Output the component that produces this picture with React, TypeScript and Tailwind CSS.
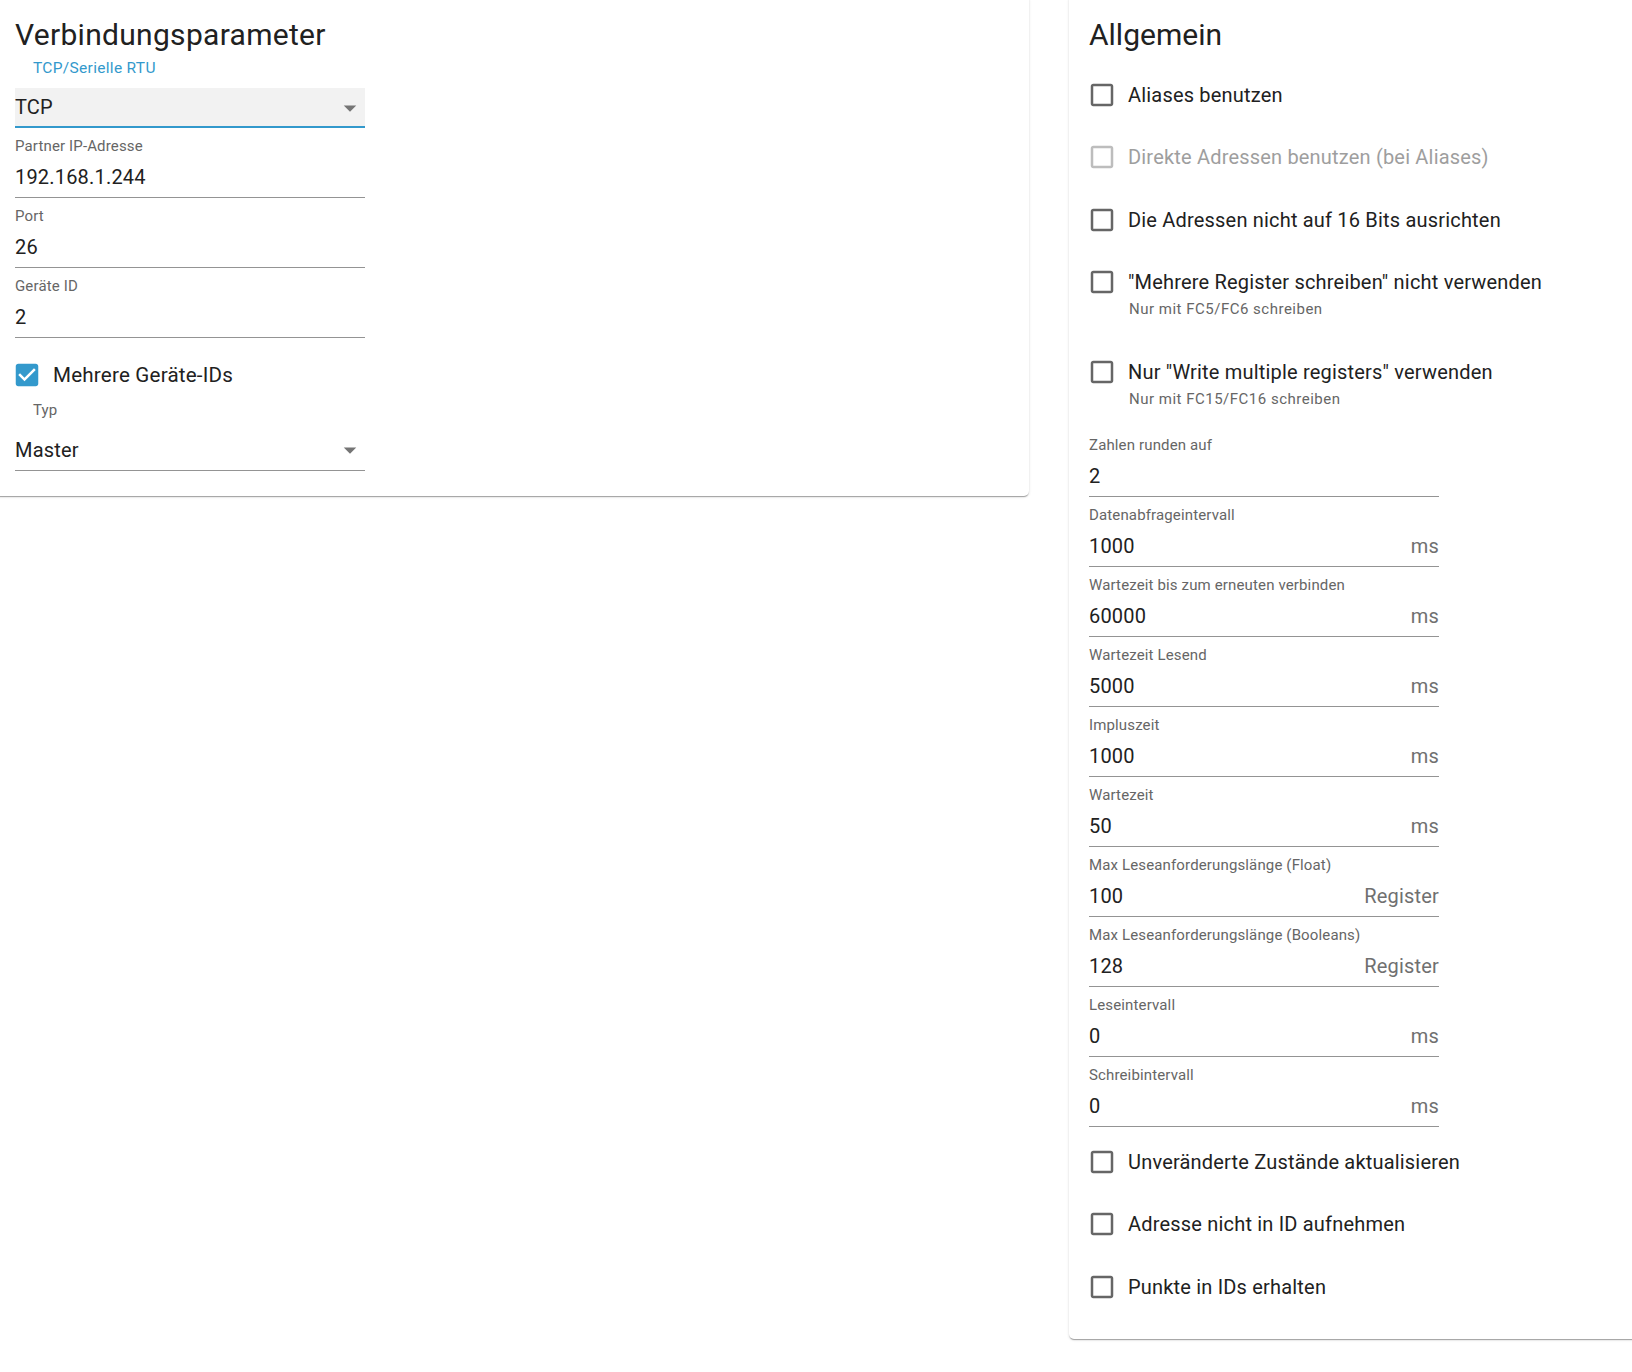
const BLANK =
  "M19 5v14H5V5h14m0-2H5c-1.1 0-2 .9-2 2v14c0 1.1.9 2 2 2h14c1.1 0 2-.9 2-2V5c0-1.1-.9-2-2-2z";
const CHECKED =
  "M19 3H5c-1.11 0-2 .9-2 2v14c0 1.1.89 2 2 2h14c1.11 0 2-.9 2-2V5c0-1.1-.89-2-2-2zm-9 14l-5-5 1.41-1.41L10 14.17l7.59-7.59L19 8l-7 7z";

const paper =
  "shrink-0 self-start rounded-[5px] bg-white shadow-[0px_2px_1px_-1px_rgba(0,0,0,0.2),0px_1px_1px_0px_rgba(0,0,0,0.14),0px_1px_3px_0px_rgba(0,0,0,0.12)]";

function Arrow({ className = "" }: { className?: string }) {
  return (
    <svg className={`h-[30px] w-[30px] shrink-0 ${className}`} viewBox="0 0 24 24" fill="#757575">
      <path d="M7 10l5 5 5-5z" />
    </svg>
  );
}

function Field({ label, value, unit }: { label: string; value: string; unit?: string }) {
  return (
    <div className="w-[350px] pt-[11px]">
      <div className="text-[15px] leading-[15px] tracking-[0.00938em] text-[#666666]">{label}</div>
      <div className="mt-[13px] flex items-end justify-between border-b border-[#949494] pb-[10px]">
        <span className="text-[20px] leading-[20px] tracking-[0.00938em] text-[#212121]">{value}</span>
        {unit && <span className="text-[20px] leading-[20px] tracking-[0.00938em] text-[#707070]">{unit}</span>}
      </div>
    </div>
  );
}

function Check({
  label,
  checked,
  disabled,
  helper,
  className = "",
  textClass = "text-[20px]",
}: {
  label: string;
  checked?: boolean;
  disabled?: boolean;
  helper?: string;
  className?: string;
  textClass?: string;
}) {
  const color = checked ? "#3399cc" : disabled ? "#bdbdbd" : "#666666";
  return (
    <div className={className}>
      <div className="flex h-[30px] items-center">
        <svg className="-ml-[2px] h-[30px] w-[30px] shrink-0" viewBox="0 0 24 24" fill={color}>
          <path d={checked ? CHECKED : BLANK} />
        </svg>
        <span
          className={`ml-[11px] whitespace-nowrap leading-[30px] tracking-[0.00938em] ${textClass} ${
            disabled ? "text-[#9e9e9e]" : "text-[#212121]"
          }`}
        >
          {label}
        </span>
      </div>
      {helper && (
        <div className="ml-[40px] mt-[5px] text-[15px] leading-[15px] tracking-[0.03333em] text-[#666666]">{helper}</div>
      )}
    </div>
  );
}

const generalFields: [string, string, string?][] = [
  ["Zahlen runden auf", "2"],
  ["Datenabfrageintervall", "1000", "ms"],
  ["Wartezeit bis zum erneuten verbinden", "60000", "ms"],
  ["Wartezeit Lesend", "5000", "ms"],
  ["Impluszeit", "1000", "ms"],
  ["Wartezeit", "50", "ms"],
  ["Max Leseanforderungslänge (Float)", "100", "Register"],
  ["Max Leseanforderungslänge (Booleans)", "128", "Register"],
  ["Leseintervall", "0", "ms"],
  ["Schreibintervall", "0", "ms"],
];

export default function App() {
  return (
    <div
      className="flex h-[1372px] w-[1632px] items-start overflow-hidden bg-white text-[#212121]"
      style={{ fontFamily: "Roboto, 'Liberation Sans', Arial, sans-serif" }}
    >
      {/* Verbindungsparameter */}
      <div className={`${paper} -ml-[5px] -mt-[5px] w-[1034px] pb-[25px] pl-[20px] pt-[20px]`}>
        <h2 className="h-[40px] text-[30px] font-normal leading-[40px] tracking-[0.01em]">Verbindungsparameter</h2>
        <div className="ml-[18px] mt-[6px] text-[15.5px] leading-[15px] tracking-[0.02em] text-[#3399cc]">
          TCP/Serielle RTU
        </div>
        <div className="mt-[12px] flex h-[40px] w-[350px] items-center justify-between border-b-2 border-[#3399cc] bg-[#f2f2f2]">
          <span className="text-[20px] leading-[20px] tracking-[0.00938em]">TCP</span>
          <Arrow className="mt-[2px]" />
        </div>
        <Field label="Partner IP-Adresse" value="192.168.1.244" />
        <Field label="Port" value="26" />
        <Field label="Geräte ID" value="2" />
        <Check
          className="mt-[22px] -ml-[1px]"
          label="Mehrere Geräte-IDs"
          checked
          textClass="text-[20.6px] tracking-[0.02em]"
        />
        <div className="ml-[18px] mt-[13px] text-[15px] leading-[15px] tracking-[0.00938em] text-[#666666]">Typ</div>
        <div className="mt-[22px] flex w-[350px] items-center justify-between border-b border-[#949494] pb-[10px]">
          <span className="text-[20px] leading-[20px] tracking-[0.00938em]">Master</span>
          <Arrow className="-my-[5px]" />
        </div>
      </div>

      {/* Allgemein */}
      <div className={`${paper} -mt-[5px] ml-[40px] w-[1034px] pb-[37px] pl-[20px] pt-[20px]`}>
        <h2 className="h-[40px] text-[30px] font-normal leading-[40px]">Allgemein</h2>
        <Check className="mt-[25px]" label="Aliases benutzen" />
        <Check className="mt-[32px]" label="Direkte Adressen benutzen (bei Aliases)" disabled />
        <Check className="mt-[33px]" label="Die Adressen nicht auf 16 Bits ausrichten" />
        <Check
          className="mt-[32px]"
          label={'"Mehrere Register schreiben" nicht verwenden'}
          helper="Nur mit FC5/FC6 schreiben"
        />
        <Check
          className="mt-[40px]"
          label={'Nur "Write multiple registers" verwenden'}
          helper="Nur mit FC15/FC16 schreiben"
        />
        <div className="mt-[20px]">
          {generalFields.map(([label, value, unit]) => (
            <Field key={label} label={label} value={value} unit={unit} />
          ))}
        </div>
        <Check className="mt-[20px]" label="Unveränderte Zustände aktualisieren" />
        <Check className="mt-[32px]" label="Adresse nicht in ID aufnehmen" />
        <Check className="mt-[33px]" label="Punkte in IDs erhalten" />
      </div>
    </div>
  );
}
